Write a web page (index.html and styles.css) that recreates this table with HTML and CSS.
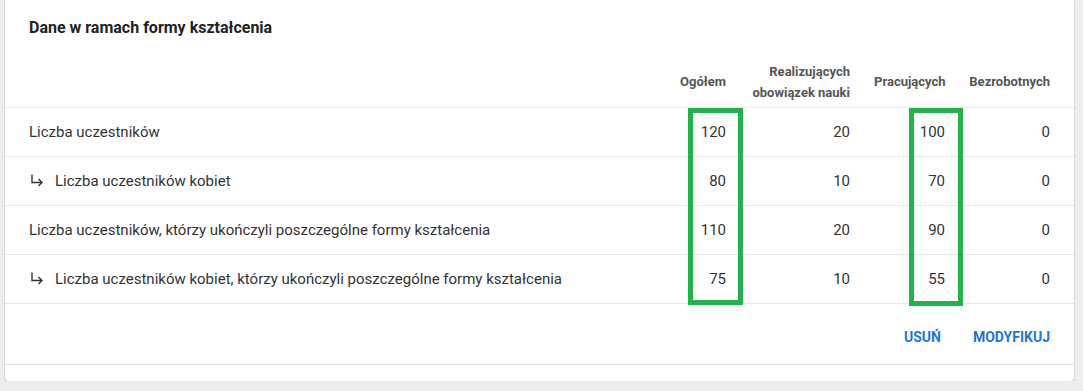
FILE: index.html
```html
<!DOCTYPE html>
<html lang="pl">
<head>
<meta charset="utf-8">
<link rel="stylesheet" href="styles.css">
</head>
<body>
<div class="page">
  <section class="card">
    <h2 class="title">Dane w ramach formy kształcenia</h2>
    <div class="table-wrap">
      <table class="data">
        <colgroup>
          <col class="c-label">
          <col class="c-ogol">
          <col class="c-real">
          <col class="c-prac">
          <col class="c-bezr">
        </colgroup>
        <thead>
          <tr>
            <th class="lbl"></th>
            <th>Ogółem</th>
            <th>Realizujących<br>obowiązek nauki</th>
            <th>Pracujących</th>
            <th>Bezrobotnych</th>
          </tr>
        </thead>
        <tbody>
          <tr>
            <td class="lbl">Liczba uczestników</td>
            <td>120</td><td>20</td><td>100</td><td>0</td>
          </tr>
          <tr>
            <td class="lbl"><span class="sub"><svg class="arrow" width="14" height="14" viewBox="0 0 14 14"><path d="M3 1.5V9.5H13M9.5 6L13 9.5L9.5 13" fill="none" stroke="#333" stroke-width="1.4"/></svg>Liczba uczestników kobiet</span></td>
            <td>80</td><td>10</td><td>70</td><td>0</td>
          </tr>
          <tr>
            <td class="lbl">Liczba uczestników, którzy ukończyli poszczególne formy kształcenia</td>
            <td>110</td><td>20</td><td>90</td><td>0</td>
          </tr>
          <tr>
            <td class="lbl"><span class="sub"><svg class="arrow" width="14" height="14" viewBox="0 0 14 14"><path d="M3 1.5V9.5H13M9.5 6L13 9.5L9.5 13" fill="none" stroke="#333" stroke-width="1.4"/></svg>Liczba uczestników kobiet, którzy ukończyli poszczególne formy kształcenia</span></td>
            <td>75</td><td>10</td><td>55</td><td>0</td>
          </tr>
        </tbody>
      </table>
      <div class="mark mark-1"></div>
      <div class="mark mark-2"></div>
    </div>
    <div class="actions">
      <button class="btn">Usuń</button>
      <button class="btn">Modyfikuj</button>
    </div>
    <div class="foot"></div>
  </section>
</div>
</body>
</html>
```
FILE: styles.css
```css
html, body {
  margin: 0;
  padding: 0;
  background: #eeeeee;
  font-family: Roboto, "Liberation Sans", Arial, sans-serif;
}
.page {
  padding: 0 9px 0 5px;
}
.card {
  background: #fff;
  border-radius: 0 0 3px 3px;
  box-shadow: 0 1px 2px rgba(0,0,0,0.25), 0 0 1px rgba(0,0,0,0.12);
}
.title {
  margin: 0;
  padding: 16px 24px 16px 24px;
  font-size: 16px;
  line-height: 24px;
  font-weight: 700;
  color: #222;
}
.table-wrap {
  position: relative;
}
.data {
  width: 100%;
  border-collapse: collapse;
  table-layout: fixed;
}
.c-ogol { width: 70px; }
.c-real { width: 124px; }
.c-prac { width: 95px; }
.c-bezr { width: 105px; }
.data th {
  height: 51px;
  padding: 0 24px 0 0;
  text-align: right;
  vertical-align: middle;
  font-size: 13px;
  line-height: 21px;
  font-weight: 700;
  color: #555;
  border-bottom: 1px solid #e6e6e6;
  white-space: nowrap;
}
.data td {
  height: 48px;
  padding: 0 24px 0 0;
  text-align: right;
  vertical-align: middle;
  font-size: 15px;
  line-height: 20px;
  color: #333;
  border-bottom: 1px solid #e6e6e6;
  white-space: nowrap;
}
.data .lbl {
  text-align: left;
  padding-left: 24px;
}
.sub {
  display: inline-flex;
  align-items: center;
}
.arrow {
  margin: -2px 12px 0 0;
}
.mark {
  position: absolute;
  top: 52px;
  border: 5px solid #22b14c;
  box-sizing: border-box;
}
.mark-1 {
  left: 683px;
  width: 55px;
  height: 197px;
}
.mark-2 {
  left: 904px;
  width: 54px;
  height: 198px;
}
.actions {
  display: flex;
  justify-content: flex-end;
  gap: 32px;
  padding: 23px 24px 17px;
  height: 20px;
}
.btn {
  border: 0;
  background: none;
  padding: 0;
  font-family: inherit;
  font-size: 14px;
  line-height: 20px;
  font-weight: 700;
  text-transform: uppercase;
  color: #1e76d3;
  cursor: pointer;
}
.foot {
  border-top: 1px solid #e0e0e0;
  height: 16px;
}
```
